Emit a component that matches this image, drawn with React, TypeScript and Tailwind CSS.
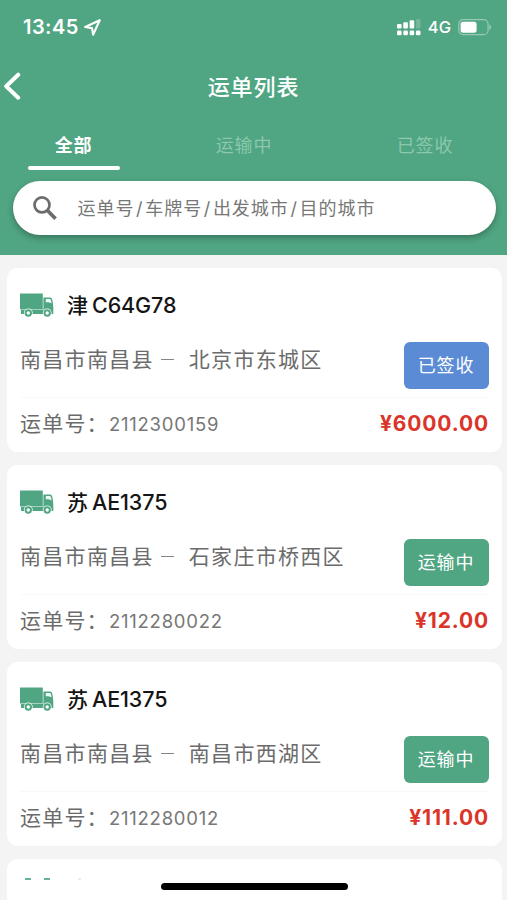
import type { ReactNode } from "react";

type Waybill = {
  region: string;
  plate: string;
  from: string;
  to: string;
  status: string;
  signed?: boolean;
  code: string;
  price: string;
};

const waybills: Waybill[] = [
  { region: "津", plate: "C64G78", from: "南昌市南昌县", to: "北京市东城区", status: "已签收", signed: true, code: "2112300159", price: "6000.00" },
  { region: "苏", plate: "AE1375", from: "南昌市南昌县", to: "石家庄市桥西区", status: "运输中", code: "2112280022", price: "12.00" },
  { region: "苏", plate: "AE1375", from: "南昌市南昌县", to: "南昌市西湖区", status: "运输中", code: "2112280012", price: "111.00" },
];

const searchFields = ["运单号", "车牌号", "出发城市", "目的城市"];

function Truck() {
  return (
    <svg className="block h-[25px] w-[34px] shrink-0" viewBox="0 0 34 25" fill="none">
      <path d="M0 0.5h22.8v15.9H0z" fill="#50a683" />
      <path d="M1 16.8h22.6V21H1z" fill="#50a683" />
      <path d="M23.4 4.4h6.8c1.7 0 2.4 2.4 2.7 5.8l.4 4.5V21h-9.9z" fill="#50a683" />
      <path d="M25.8 6h4c1 0 1.5 2 1.7 4.2l-3-.9h-2.7z" fill="#eef8f4" />
      <circle cx="8.3" cy="19.8" r="4.4" fill="#fff" />
      <circle cx="27.2" cy="19.8" r="4.4" fill="#fff" />
      <circle cx="8.3" cy="20" r="2.7" stroke="#50a683" strokeWidth="2" />
      <circle cx="27.2" cy="20" r="2.7" stroke="#50a683" strokeWidth="2" />
    </svg>
  );
}

function StatusBar() {
  return (
    <div className="flex h-[54px] items-center pl-[23px] pr-[15px] text-white">
      <span className="text-[20px] font-semibold tracking-[0.45px]">13:45</span>
      <svg className="ml-[5px] h-[17px] w-[17px]" viewBox="0 0 17 17" fill="none" stroke="#fff" strokeWidth="2.1" strokeLinejoin="round">
        <path d="M15.7 1.3 1.2 8l6.8 1.1 1.1 6.6z" />
      </svg>
      <svg className="ml-auto h-[17px] w-[24px]" viewBox="0 0 24 17" fill="#fff">
        <rect x="0" y="5" width="4.6" height="4.6" rx="1" />
        <rect x="6.3" y="3.3" width="4.6" height="6.3" rx="1" />
        <rect x="12.6" y="1.3" width="4.6" height="8.3" rx="1" />
        <rect x="18.9" y="0" width="4.6" height="9.6" rx="1" opacity="0.2" />
        <rect x="0" y="11.6" width="4.6" height="4.6" rx="1.3" />
        <rect x="6.3" y="11.6" width="4.6" height="4.6" rx="1.3" />
        <rect x="12.6" y="11.6" width="4.6" height="4.6" rx="1.3" />
        <rect x="18.9" y="11.6" width="4.6" height="4.6" rx="1.3" />
      </svg>
      <span className="ml-[7px] pt-[1px] text-[16.5px] font-medium">4G</span>
      <svg className="ml-[7px] h-[17px] w-[34px]" viewBox="0 0 34 17" fill="none">
        <rect x="0.7" y="0.7" width="29.4" height="15" rx="4.5" stroke="#fff" strokeOpacity="0.4" strokeWidth="1.2" />
        <rect x="2.6" y="2.7" width="16" height="11" rx="2.5" fill="#fff" />
        <path d="M31.4 5.5c2 .6 2 4.8 0 5.4z" fill="#fff" fillOpacity="0.5" />
      </svg>
    </div>
  );
}

function Tab({ children, active }: { children: ReactNode; active?: boolean }) {
  return (
    <div className={`relative flex flex-1 items-center justify-center pt-[1px] text-[18px] tracking-[0.8px] ${active ? "font-bold text-white" : "font-normal text-[#8bc8ad]"}`}>
      {children}
      {active && <span className="absolute bottom-[1px] h-[4px] w-[92px] rounded-full bg-white" />}
    </div>
  );
}

function Card({ bill }: { bill: Waybill }) {
  return (
    <article className="flex h-[184px] shrink-0 flex-col rounded-[11px] bg-white pl-[13.5px] pr-[13px]">
      <div className="flex h-[74px] items-center">
        <Truck />
        <span className="ml-[13px] text-[21px] font-medium text-[#151515]">{bill.region}</span>
        <span className="ml-[4px] pt-[2px] text-[21.5px] font-medium tracking-[-0.1px] text-[#151515]">{bill.plate}</span>
      </div>
      <div className="flex h-[56px] items-start justify-between border-b border-[#f8f8f8]">
        <div className="flex h-[34px] items-center whitespace-nowrap text-[21px] tracking-[1.3px] text-[#6b6b6b]">
          <span>{bill.from}</span>
          <span className="ml-[7px] mt-[1px] h-[1.5px] w-[13px] bg-[#858585]" />
          <span className="ml-[15px]">{bill.to}</span>
        </div>
        <div className={`flex h-[47px] w-[85px] items-center justify-center rounded-[6px] text-[18px] tracking-[0.8px] text-white ${bill.signed ? "bg-[#5b8bd4]" : "bg-[#50a582]"}`}>
          {bill.status}
        </div>
      </div>
      <div className="flex h-[50px] items-center justify-between">
        <div className="flex items-center whitespace-nowrap text-[#6b6b6b]">
          <span className="w-[89px] text-[21px] tracking-[1.2px]">运单号：</span>
          <span className="pt-[2px] text-[18.5px] tracking-[0.75px] text-[#777]">{bill.code}</span>
        </div>
        <span className="mr-[-0.5px] pt-[1px] text-[21px] font-bold tracking-[0.85px] text-[#da3529]">¥{bill.price}</span>
      </div>
    </article>
  );
}

export default function App() {
  return (
    <div className="relative flex h-[900px] w-[507px] flex-col overflow-hidden bg-[#f4f4f4] font-['Inter','Noto_Sans_CJK_SC',sans-serif] leading-none">
      <header className="flex h-[255px] shrink-0 flex-col bg-[#50a582]">
        <StatusBar />
        <div className="grid h-[65px] grid-cols-[60px_1fr_60px] items-center">
          <svg className="ml-[3px] h-[30px] w-[19px]" viewBox="0 0 19 30" fill="none" stroke="#fff" strokeWidth="4" strokeLinecap="round" strokeLinejoin="round">
            <path d="M15.2 2.7 3.2 14.2l12 11.5" />
          </svg>
          <h1 className="text-center text-[22px] font-medium tracking-[0.9px] text-white">运单列表</h1>
        </div>
        <nav className="flex h-[52px]">
          <div className="flex w-[147px] shrink-0"><Tab active>全部</Tab></div>
          <div className="flex w-[194px] shrink-0"><Tab>运输中</Tab></div>
          <div className="flex w-[168px] shrink-0"><Tab>已签收</Tab></div>
        </nav>
        <div className="ml-[12.5px] mr-[11px] mt-[10px] flex h-[54px] shrink-0 items-center rounded-full bg-white pl-[20px] shadow-[0_3px_6px_rgba(0,0,0,0.28)]">
          <svg className="h-[24px] w-[24px]" viewBox="0 0 24 24" fill="none" stroke="#6c6c6c">
            <circle cx="9" cy="8.9" r="7.5" strokeWidth="2.7" />
            <path d="m14.2 14.2 8.4 8.5" strokeWidth="3.7" />
          </svg>
          <div className="ml-[21px] flex whitespace-nowrap pt-[1px] text-[18px] tracking-[1px] text-[#777]">
            {searchFields.map((field, index) => (
              <span key={field}>
                {index > 0 && <span className="mx-[1.6px]">/</span>}
                {field}
              </span>
            ))}
          </div>
        </div>
      </header>
      <main className="flex flex-col gap-[13px] pl-[6.5px] pr-[5.5px] pt-[13px]">
        {waybills.map((bill) => <Card key={bill.code} bill={bill} />)}
        <div className="flex h-[60px] shrink-0 rounded-t-[11px] bg-white pl-[18.5px] pt-[18.5px]">
          <span className="h-[2px] w-[6px] bg-[#68b393]" />
          <span className="ml-[13px] h-[2px] w-[6px] bg-[#68b393]" />
          <span className="ml-[28px] h-[2px] w-[3px] bg-[#ededed]" />
        </div>
      </main>
      <div className="absolute bottom-[10.5px] left-[161px] h-[7px] w-[187px] rounded-full bg-black" />
    </div>
  );
}
